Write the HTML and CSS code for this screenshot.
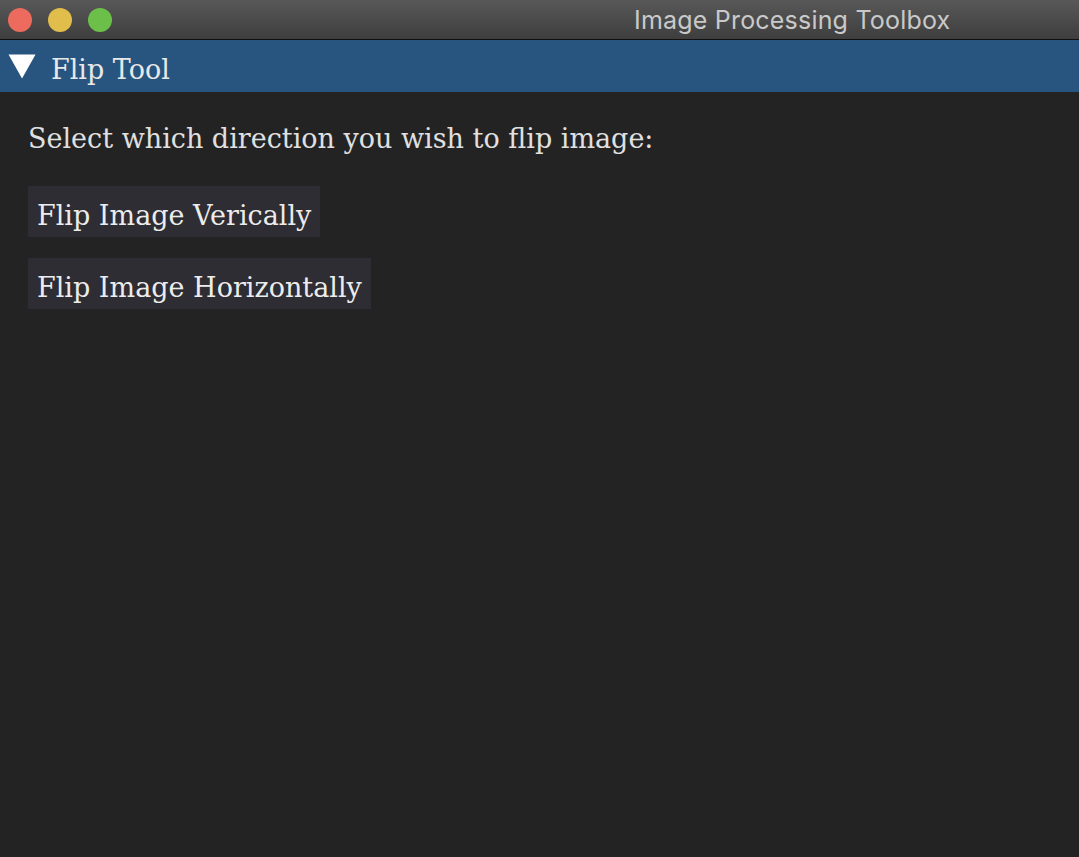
FILE: index.html
```html
<!DOCTYPE html>
<html>
<head>
<meta charset="utf-8">
<link rel="stylesheet" href="styles.css">
</head>
<body>
<div class="window">
  <div class="titlebar">
    <div class="lights">
      <span class="light red"></span>
      <span class="light yellow"></span>
      <span class="light green"></span>
    </div>
    <div class="title">Image Processing Toolbox</div>
  </div>
  <div class="header">
    <svg class="tri" width="28" height="25" viewBox="0 0 28 25"><polygon points="0.5,0.5 27.5,0.5 14,24.5" fill="#ffffff"/></svg>
    <span class="header-text">Flip Tool</span>
  </div>
  <div class="content">
    <p class="label">Select which direction you wish to flip image:</p>
    <button class="btn">Flip Image Verically</button>
    <button class="btn">Flip Image Horizontally</button>
  </div>
</div>
</body>
</html>
```
FILE: styles.css
```css
html, body {
  margin: 0;
  padding: 0;
  background: #232323;
}
.window {
  width: 1079px;
  height: 857px;
  display: flex;
  flex-direction: column;
  background: #232323;
  overflow: hidden;
}
.titlebar {
  height: 39px;
  flex: none;
  display: flex;
  align-items: center;
  background: linear-gradient(#585858, #3e3e3e);
  border-bottom: 1px solid #111111;
}
.lights {
  display: flex;
  gap: 16px;
  padding-left: 8px;
}
.light {
  width: 24px;
  height: 24px;
  border-radius: 50%;
  display: block;
}
.red { background: #ec6a5e; }
.yellow { background: #e1bd4c; }
.green { background: #6cc04a; }
.title {
  margin-left: 522px;
  font-family: "Inter", "Liberation Sans", sans-serif;
  font-size: 25px;
  color: #c9c9c9;
  letter-spacing: 0.2px;
}
.header {
  height: 52px;
  flex: none;
  background: #27557f;
  display: flex;
  align-items: flex-start;
  padding-left: 8px;
  gap: 15px;
}
.tri {
  display: block;
  margin-top: 14px;
}
.header-text {
  margin-top: 14px;
  font-family: "DejaVu Serif", serif;
  font-size: 27px;
  line-height: 32px;
  color: #e8e8e8;
}
.content {
  padding: 30px 28px 20px;
  display: flex;
  flex-direction: column;
  align-items: flex-start;
}
.label {
  margin: 0 0 30px 0;
  font-family: "DejaVu Serif", serif;
  font-size: 27px;
  color: #e0e0e0;
  line-height: 34px;
}
.btn {
  border: none;
  background: #2e2d33;
  color: #ececec;
  font-family: "DejaVu Serif", serif;
  font-size: 27px;
  line-height: 32px;
  height: 51px;
  box-sizing: border-box;
  padding: 8px 9px 0;
  margin-bottom: 21px;
}
```
